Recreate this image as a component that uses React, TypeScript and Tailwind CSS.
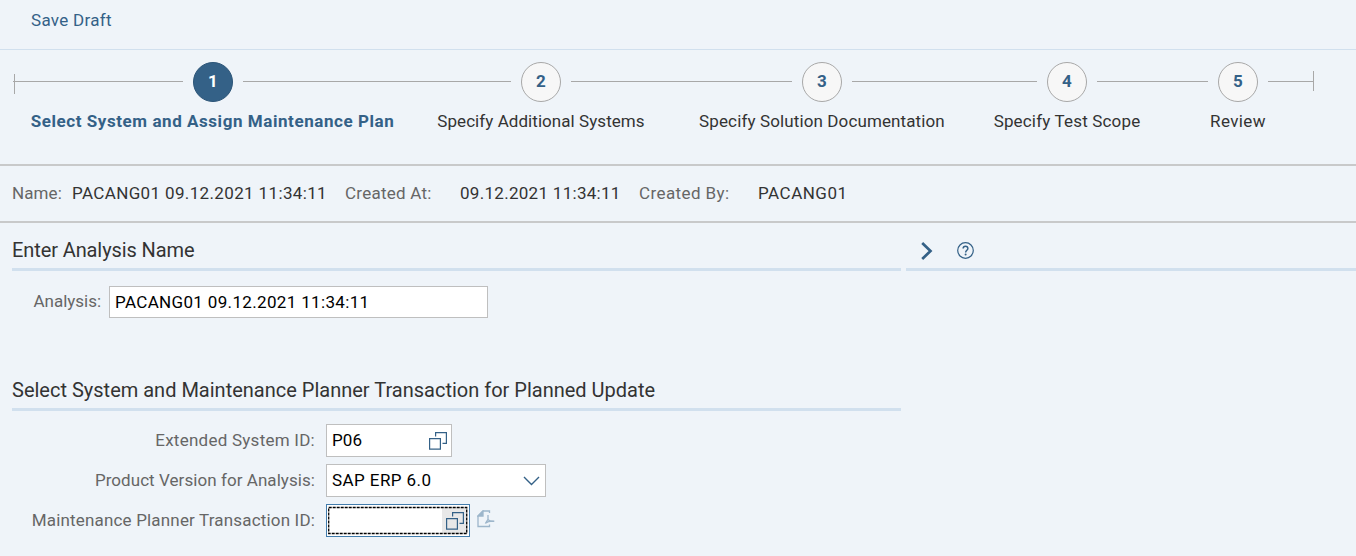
import type { ReactNode } from 'react';

interface Step {
  label: string;
  width: string;
  tracking: string;
}

const steps: Step[] = [
  { label: 'Select System and Assign Maintenance Plan', width: 'w-[399px]', tracking: 'tracking-[0.56px]' },
  { label: 'Specify Additional Systems', width: 'w-[258px]', tracking: 'tracking-[0.06px]' },
  { label: 'Specify Solution Documentation', width: 'w-[304px]', tracking: 'tracking-[0.12px]' },
  { label: 'Specify Test Scope', width: 'w-[186px]', tracking: 'tracking-[0.17px]' },
  { label: 'Review', width: 'w-[154px]', tracking: 'tracking-[0.4px]' },
];

function RoadMap() {
  return (
    <nav className="flex h-[114px] pt-3 pl-[13px]">
      {steps.map((step, i) => {
        const active = i === 0;
        const last = i === steps.length - 1;
        return (
          <div key={step.label} className={`${step.width} flex shrink-0 flex-col`}>
            <div className="flex h-10 items-center">
              <div className={active ? 'flex h-5 w-[170px] items-center' : last ? 'flex h-5 w-12 items-center' : 'flex h-5 flex-1 items-center'}>
                {active && <div className="-mt-px h-px w-px bg-[#a8a8a8]" />}
                {active && <div className="mt-[4px] h-5 w-px bg-[#a8a8a8]" />}
                <div className="-mt-px h-px flex-1 bg-[#a8a8a8]" />
              </div>
              <div
                className={`mx-[10px] flex size-10 shrink-0 items-center justify-center rounded-full border pb-0.5 text-[17px] font-bold ${
                  active ? 'border-[#2c5578] bg-[#346187] text-white' : 'border-[#a8a8a8] bg-[#f7f7f7] text-[#346187]'
                }`}
              >
                {i + 1}
              </div>
              <div className={last ? 'flex h-5 w-[46px] items-center' : 'flex h-5 flex-1 items-center'}>
                <div className="-mt-px h-px flex-1 bg-[#a8a8a8]" />
                {last && <div className="-mt-[2px] h-5 w-px bg-[#a8a8a8]" />}
              </div>
            </div>
            <div
              className={`mt-[9px] flex h-5 items-center justify-center whitespace-nowrap ${step.tracking} ${
                active ? 'font-bold text-[#346187]' : 'text-[#333]'
              } ${last ? 'pl-0.5' : ''}`}
            >
              {step.label}
            </div>
          </div>
        );
      })}
    </nav>
  );
}

function ValueHelpIcon() {
  return (
    <svg width="18" height="18" viewBox="0 0 18 18" fill="none" stroke="#346187" strokeWidth="1.2">
      <path d="M0.6 6.6H11.4V17.1H0.6Z" />
      <path d="M6.6 4.5V0.7H17.4V11.4H13.5" />
    </svg>
  );
}

function PdfIcon() {
  return (
    <svg width="18" height="18" viewBox="0 0 18 18" fill="none" stroke="#9db6cb" strokeWidth="1.3">
      <path d="M12.5 3V1H6L1 6V16.5H12.5V14.5" />
      <path d="M6 1V6H1Z" fill="#9db6cb" />
      <path d="M11 5V9.3L8.3 13.5M11 9.3C12 10.8 14 11.2 17.3 11.3M8.3 13.2C10.3 11.6 13 10.9 17.3 11.1" />
    </svg>
  );
}

function SectionTitle({ children, tracking }: { children: ReactNode; tracking: string }) {
  return (
    <h2 className={`flex h-12 w-[889px] items-center border-b-[3px] border-[#d1e0ee] pt-[9px] text-[20px] text-[#333] ${tracking}`}>
      {children}
    </h2>
  );
}

function FieldRow({ label, tracking, children }: { label: string; tracking: string; children: ReactNode }) {
  return (
    <div className="flex h-[33px] items-center">
      <label className={`mr-[11px] w-[303px] pb-0.5 text-right whitespace-nowrap text-[#666] ${tracking}`}>{label}</label>
      {children}
    </div>
  );
}

export default function App() {
  return (
    <div className="h-[556px] w-[1356px] overflow-hidden bg-[#eff4f9] text-[17px] leading-5 font-['Roboto','Liberation_Sans',sans-serif]">
      <div className="flex h-[50px] items-center border-b border-[#d1e0ee] pb-2.5 pl-[31px] tracking-[0.29px] text-[#346187]">
        <button>Save Draft</button>
      </div>
      <RoadMap />
      <div className="flex h-[59px] items-center border-y-2 border-[#c8c9ca] pb-0.5 pl-3 whitespace-nowrap text-[#333]">
        <span className="w-[60px] tracking-[0.1px] text-[#666]">Name:</span>
        <span className="w-[273px] tracking-[0.36px]">PACANG01 09.12.2021 11:34:11</span>
        <span className="w-[115px] tracking-[0.25px] text-[#666]">Created At:</span>
        <span className="w-[179px] tracking-[0.29px]">09.12.2021 11:34:11</span>
        <span className="w-[119px] tracking-[0.4px] text-[#666]">Created By:</span>
        <span className="tracking-[0.5px]">PACANG01</span>
      </div>
      <div className="flex">
        <main className="w-[901px] pl-3">
          <SectionTitle tracking="tracking-[-0.1px]">Enter Analysis Name</SectionTitle>
          <div className="mt-[15px] flex h-8 items-center">
            <label className="mr-2 w-[89px] pb-0.5 text-right tracking-[-0.03px] text-[#666]">Analysis:</label>
            <div className="flex h-8 w-[379px] items-center border border-[#bfbfbf] bg-white pl-[5px] tracking-[0.34px] text-black">
              PACANG01 09.12.2021 11:34:11
            </div>
          </div>
          <div className="mt-[45px]">
            <SectionTitle tracking="tracking-[0px]">Select System and Maintenance Planner Transaction for Planned Update</SectionTitle>
          </div>
          <div className="mt-[13px] flex flex-col gap-[7px]">
            <FieldRow label="Extended System ID:" tracking="tracking-[0.25px]">
              <div className="flex h-[33px] w-[126px] items-center justify-between border border-[#bfbfbf] bg-white pr-1 pl-[5px] tracking-[0.1px] text-black">
                <span className="pb-0.5">P06</span>
                <ValueHelpIcon />
              </div>
            </FieldRow>
            <FieldRow label="Product Version for Analysis:" tracking="tracking-[0.06px]">
              <div className="flex h-[33px] w-[220px] items-center justify-between border border-[#bfbfbf] bg-white pr-[5px] pl-[5px] tracking-[0.42px] text-black">
                <span className="pb-0.5">SAP ERP 6.0</span>
                <svg width="17" height="10" viewBox="0 0 17 10" fill="none" stroke="#346187" strokeWidth="1.4">
                  <path d="M1 1L8.5 8.5L16 1" />
                </svg>
              </div>
            </FieldRow>
            <FieldRow label="Maintenance Planner Transaction ID:" tracking="tracking-[0.17px]">
              <div className="h-[33px] w-[144px] border border-[#427cac] bg-white p-px">
                <div className="relative flex h-full items-center justify-end">
                  <div className="flex h-[27px] w-[26px] items-center bg-[#e8e8e8] pl-1">
                    <ValueHelpIcon />
                  </div>
                  <svg className="absolute inset-0" width="140" height="29" fill="none" stroke="#000" strokeWidth="1.3" strokeDasharray="3 1">
                    <rect x="0.7" y="1.5" width="138" height="26" />
                  </svg>
                </div>
              </div>
              <div className="ml-[7px] pb-[3px]">
                <PdfIcon />
              </div>
            </FieldRow>
          </div>
        </main>
        <aside className="ml-[5px] flex h-12 flex-1 items-center border-b-[3px] border-[#d1e0ee] pt-[10px] pl-[15px]">
          <svg width="12" height="18" viewBox="0 0 12 18" fill="none" stroke="#346187" strokeWidth="2.7">
            <path d="M1.2 1L9.5 9L1.2 17" />
          </svg>
          <svg className="ml-6" width="17" height="17" viewBox="0 0 17 17" fill="none" stroke="#346187" strokeWidth="1.2">
            <circle cx="8.5" cy="8.5" r="7.8" />
            <path d="M6.1 6.5C6.1 5.1 7.1 4.2 8.5 4.2S10.9 5.1 10.9 6.4C10.9 8.1 8.6 8.3 8.6 10.4" strokeWidth="1.4" />
            <circle cx="8.6" cy="12.6" r="1" fill="#346187" stroke="none" />
          </svg>
        </aside>
      </div>
    </div>
  );
}
